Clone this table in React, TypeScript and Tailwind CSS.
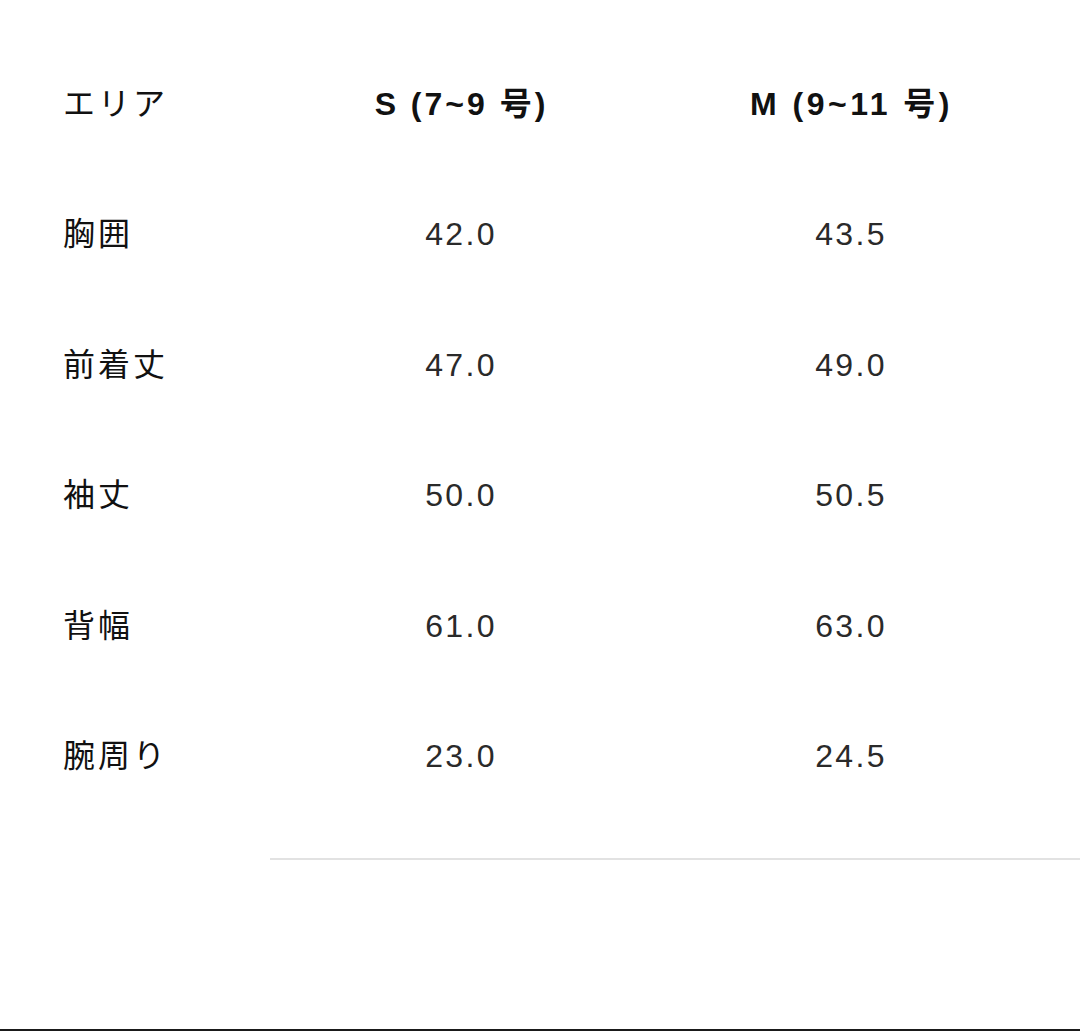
const rows = [
  { area: "胸囲", s: "42.0", m: "43.5" },
  { area: "前着丈", s: "47.0", m: "49.0" },
  { area: "袖丈", s: "50.0", m: "50.5" },
  { area: "背幅", s: "61.0", m: "63.0" },
  { area: "腕周り", s: "23.0", m: "24.5" },
]

const font = "font-['Liberation_Sans','Noto_Sans_CJK_JP',sans-serif]"

export default function App() {
  return (
    <div className={`w-[1080px] h-[1031px] bg-white flex flex-col overflow-hidden ${font}`}>
      <div className="pt-[39px]">
        <div className="grid grid-cols-[270px_380px_400px] h-[130px] items-center text-[32px] text-[#111]">
          <div className="pl-[63px] tracking-[3px]">エリア</div>
          <div className="text-center font-bold tracking-[3px] pl-[3px]">S (7~9 号)</div>
          <div className="text-center font-bold tracking-[3.5px] pl-[3px]">M (9~11 号)</div>
        </div>
        {rows.map((r) => (
          <div key={r.area} className="grid grid-cols-[270px_380px_400px] h-[130.5px] items-center text-[32px]">
            <div className="pl-[63px] text-[#111] tracking-[3px]">{r.area}</div>
            <div className="text-center text-[#2a2a2a] tracking-[2.3px] pl-[2px]">{r.s}</div>
            <div className="text-center text-[#2a2a2a] tracking-[2.3px] pl-[2px]">{r.m}</div>
          </div>
        ))}
      </div>
      <div className="mt-[36px] ml-[270px] h-[2px] bg-[#e2e2e2]" />
      <div className="flex-1" />
      <div className="h-[2px] bg-[#1a1a1a]" />
    </div>
  )
}
